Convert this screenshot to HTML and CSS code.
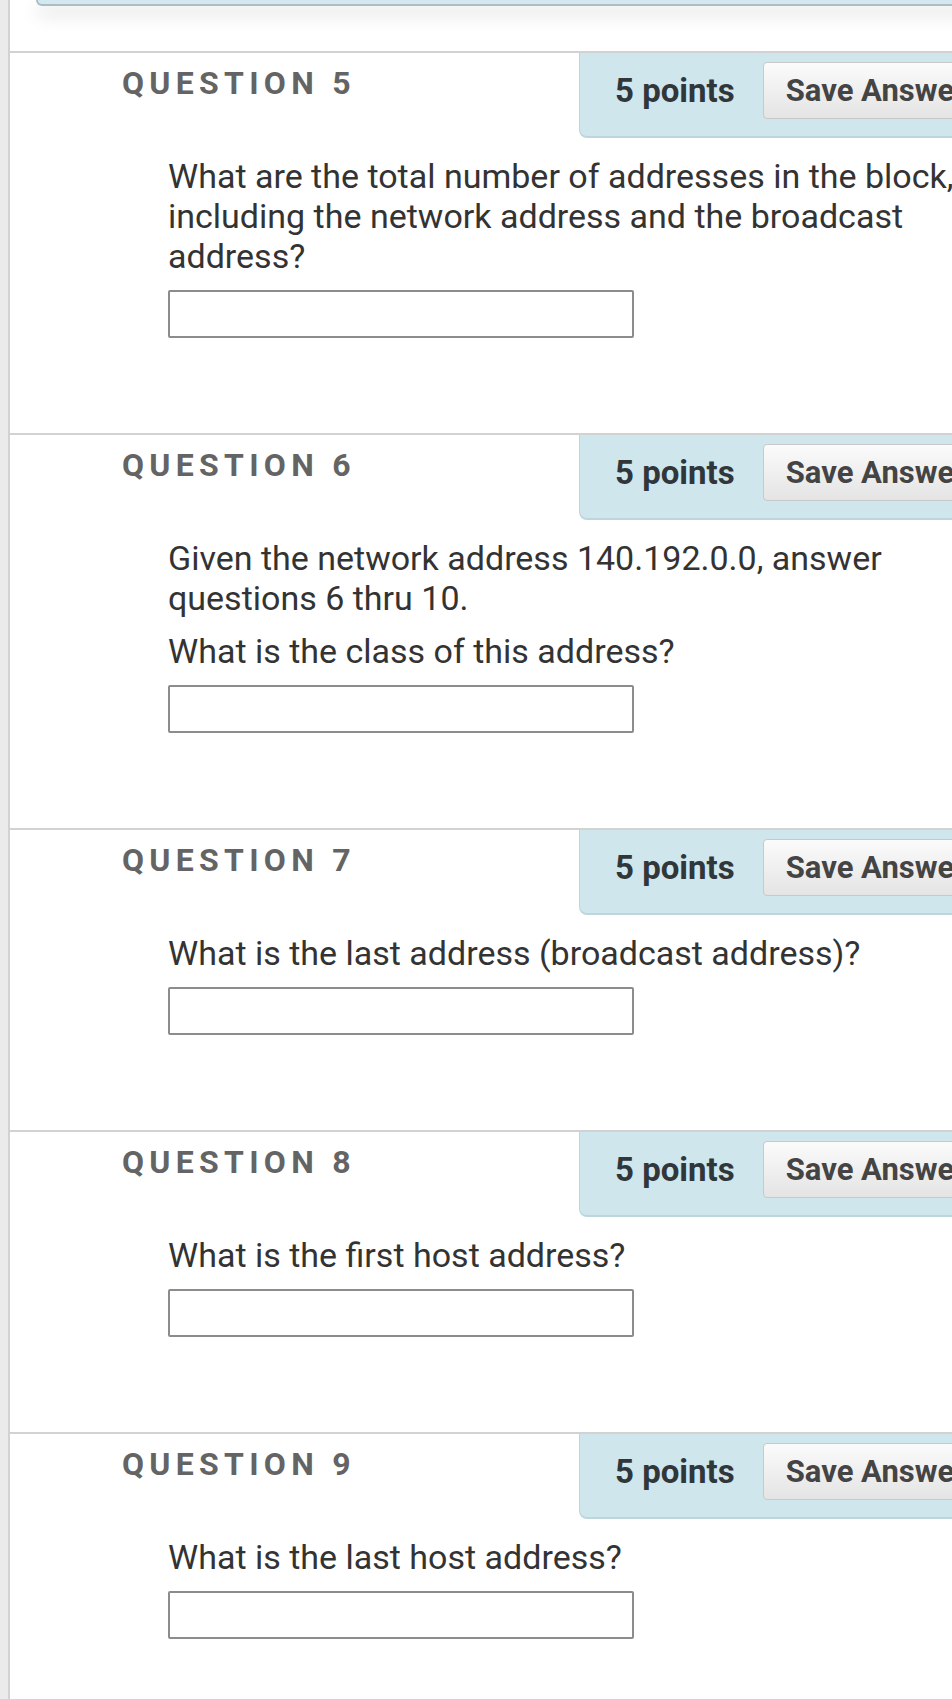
FILE: index.html
```html
<!DOCTYPE html>
<html lang="en">
<head>
  <meta charset="UTF-8">
  <meta name="viewport" content="width=device-width, initial-scale=1.0">
  <title>Test</title>
  <link rel="stylesheet" href="styles.css">
</head>
<body>
  <div class="pagina">
    <div class="cartao-topo"></div>

    <div class="questao">
      <div class="cabecalho">
        <h3 class="titulo">QUESTION 5</h3>
        <div class="pontos">
          <span>5 points</span>
          <button>Save Answer</button>
        </div>
      </div>
      <div class="corpo">
        <p>What are the total number of addresses in the block, including the network address and the broadcast address?</p>
        <input type="text">
      </div>
    </div>

    <div class="questao">
      <div class="cabecalho">
        <h3 class="titulo">QUESTION 6</h3>
        <div class="pontos">
          <span>5 points</span>
          <button>Save Answer</button>
        </div>
      </div>
      <div class="corpo">
        <p>Given the network address 140.192.0.0, answer questions 6 thru 10.</p>
        <p>What is the class of this address?</p>
        <input type="text">
      </div>
    </div>

    <div class="questao">
      <div class="cabecalho">
        <h3 class="titulo">QUESTION 7</h3>
        <div class="pontos">
          <span>5 points</span>
          <button>Save Answer</button>
        </div>
      </div>
      <div class="corpo">
        <p>What is the last address (broadcast address)?</p>
        <input type="text">
      </div>
    </div>

    <div class="questao">
      <div class="cabecalho">
        <h3 class="titulo">QUESTION 8</h3>
        <div class="pontos">
          <span>5 points</span>
          <button>Save Answer</button>
        </div>
      </div>
      <div class="corpo">
        <p>What is the first host address?</p>
        <input type="text">
      </div>
    </div>

    <div class="questao">
      <div class="cabecalho">
        <h3 class="titulo">QUESTION 9</h3>
        <div class="pontos">
          <span>5 points</span>
          <button>Save Answer</button>
        </div>
      </div>
      <div class="corpo">
        <p>What is the last host address?</p>
        <input type="text">
      </div>
    </div>
  </div>
</body>
</html>
```

FILE: styles.css
```css
html,
body {
  overflow: hidden;
}

body {
  margin: 0;
  font-family: Roboto, "Liberation Sans", Arial, sans-serif;
  background-color: #ebebeb;
}

.pagina {
  width: 1200px;
  min-height: 100vh;
  margin-left: 8px;
  border-left: 2px solid #d2d2d2;
  background-color: #fff;
}

.cartao-topo {
  height: 4px;
  margin-left: 26px;
  margin-bottom: 45px;
  background-color: #d4e9ef;
  border: 2px solid #a9bec5;
  border-top: none;
  border-radius: 0 0 10px 10px;
  box-shadow: 0 8px 18px rgba(0, 0, 0, 0.18);
}

.questao {
  border-top: 2px solid #d2d2d2;
  padding-bottom: 95px;
}

.cabecalho {
  display: flex;
  align-items: flex-start;
}

.titulo {
  width: 457px;
  flex: none;
  margin: 10px 0 0 112px;
  font-size: 32px;
  line-height: 40px;
  font-weight: bold;
  letter-spacing: 5.3px;
  color: #646464;
}

.pontos {
  display: flex;
  align-items: center;
  gap: 28px;
  padding: 9px 40px 17px 35px;
  background-color: #cfe6ec;
  border-left: 1px solid #bdd5dc;
  border-bottom: 2px solid #bdd5dc;
  border-radius: 0 0 0 8px;
  white-space: nowrap;
}

.pontos span {
  font-size: 33px;
  font-weight: bold;
  color: #30363a;
}

.pontos button {
  height: 57px;
  padding: 0 22px;
  font-family: inherit;
  font-size: 31px;
  font-weight: bold;
  color: #444;
  background: linear-gradient(#fbfbfb, #e4e4e4);
  border: 1px solid #c9c9c9;
  border-radius: 4px;
}

.corpo {
  width: 820px;
  margin: 18px 0 0 158px;
}

.corpo p {
  margin: 0 0 13px;
  font-size: 34px;
  line-height: 40px;
  color: #333;
}

.corpo p:last-of-type {
  margin-bottom: 14px;
}

.corpo input {
  display: block;
  box-sizing: border-box;
  width: 466px;
  height: 48px;
  margin: 0;
  border: 2px solid #8c8c8c;
  border-radius: 2px;
  background-color: #fff;
}
```
